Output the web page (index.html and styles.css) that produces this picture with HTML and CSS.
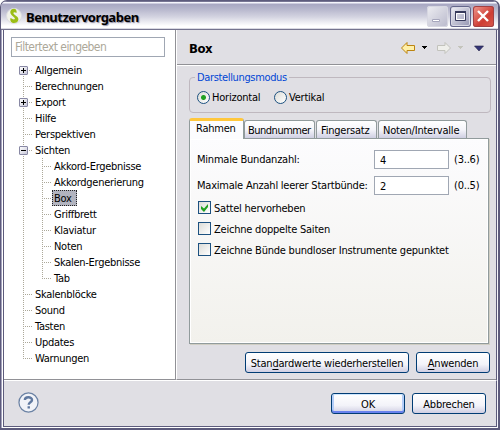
FILE: index.html
```html
<!DOCTYPE html>
<html lang="de">
<head>
<meta charset="utf-8">
<title>Benutzervorgaben</title>
<link rel="stylesheet" href="styles.css">
</head>
<body>
<div class="window">
  <header class="titlebar">
    <svg class="logo" width="16" height="16" viewBox="0 0 16 16"><circle cx="8" cy="8" r="7.500" fill="#f1f2ea" stroke="#dcdde0"/><path d="M8 .8C3.500 1 3.500 5.500 6 7.500l2.500 2.200c1 1.200 0 2-1.500 1.600L4.500 10c-.8 3 1 5 3.500 5 4 0 5.500-3.500 3.500-6L8 6.200C6.500 4.800 8 3.500 10.500 5c.5-2.500-.5-4.200-2.500-4.200z" fill="#9bbd16"/></svg>
    <h1 class="title">Benutzervorgaben</h1>
    <div class="controls">
      <span class="ctl ctl-min"><svg width="21" height="21"><path d="M5.500 13.500h7v2h-7z" fill="#fff" stroke="#a6a6bc"/></svg></span>
      <span class="ctl ctl-max"><svg width="21" height="21"><path d="M5.500 5.500h10v9h-10z" fill="none" stroke="#373a5c"/><path d="M5 6h11" stroke="#373a5c" stroke-width="2"/><path d="M6.500 7.500h8v6h-8z" fill="none" stroke="#fff"/></svg></span>
      <span class="ctl ctl-close"><svg width="21" height="21"><path d="M5 5l10 10M15 5L5 15" stroke="#fff" stroke-width="2.400"/></svg></span>
    </div>
  </header>
  <div class="main">
    <nav class="side">
      <div class="filter">Filtertext eingeben</div>
      <ul class="tree">
        <li class="node first"><i class="box plus"></i><span>Allgemein</span></li>
        <li class="node"><span>Berechnungen</span></li>
        <li class="node"><i class="box plus"></i><span>Export</span></li>
        <li class="node"><span>Hilfe</span></li>
        <li class="node"><span>Perspektiven</span></li>
        <li class="node"><i class="box"></i><span>Sichten</span></li>
        <li class="branch"><ul class="tree">
          <li class="node"><span>Akkord-Ergebnisse</span></li>
          <li class="node"><span>Akkordgenerierung</span></li>
          <li class="node"><span class="selected">Box</span></li>
          <li class="node"><span>Griffbrett</span></li>
          <li class="node"><span>Klaviatur</span></li>
          <li class="node"><span>Noten</span></li>
          <li class="node"><span>Skalen-Ergebnisse</span></li>
          <li class="node last"><span>Tab</span></li>
        </ul></li>
        <li class="node"><span>Skalenblöcke</span></li>
        <li class="node"><span>Sound</span></li>
        <li class="node"><span>Tasten</span></li>
        <li class="node"><span>Updates</span></li>
        <li class="node last"><span>Warnungen</span></li>
      </ul>
    </nav>
    <section class="page">
      <div class="pagehead">
        <h2>Box</h2>
        <svg width="90" height="16" viewBox="0 0 90 16">
          <path d="M1.500 8L7 2.500V5.500h7.500v5H7v3z" fill="#fff0a8" stroke="#bc8410"/>
          <path d="M22 6h5v1h-1v1h-1v1h-1V8h-1V7h-1z" fill="#000"/>
          <path d="M50.500 8L45 2.500V5.500h-7.500v5H45v3z" fill="#efefeb" stroke="#c2c2bc"/>
          <path d="M58 6h5v1h-1v1h-1v1h-1V8h-1V7h-1z" fill="#c4c4bc"/>
          <path d="M74.500 6h9L79 11z" fill="#343477" stroke="#242448" stroke-width=".6"/>
        </svg>
      </div>
      <div class="pagebody">
        <div class="group">
          <span class="legend">Darstellungsmodus</span>
          <span class="option"><i class="radio on"></i><span>Horizontal</span></span>
          <span class="option"><i class="radio"></i><span>Vertikal</span></span>
        </div>
        <div class="tabs">
          <span class="tab active">Rahmen</span>
          <span class="tab t2">Bundnummer</span>
          <span class="tab t3">Fingersatz</span>
          <span class="tab t4">Noten/Intervalle</span>
        </div>
        <div class="panel">
          <div class="field"><span class="lab">Minmale Bundanzahl:</span><span class="input">4</span><span class="range">(3..6)</span></div>
          <div class="field"><span class="lab">Maximale Anzahl leerer Startbünde:</span><span class="input">2</span><span class="range">(0..5)</span></div>
          <div class="check"><i class="cb"><svg width="11" height="11"><path d="M2 4v3l3 3 4-5V2L5 6.500z" fill="#21a121"/></svg></i><span>Sattel hervorheben</span></div>
          <div class="check"><i class="cb"></i><span>Zeichne doppelte Saiten</span></div>
          <div class="check"><i class="cb"></i><span>Zeichne Bünde bundloser Instrumente gepunktet</span></div>
        </div>
        <div class="actions">
          <span class="btn wide"><span>Stan<u>d</u>ardwerte wiederherstellen</span></span>
          <span class="btn"><span><u>A</u>nwenden</span></span>
        </div>
      </div>
    </section>
  </div>
  <footer class="footer">
    <svg class="help" width="21" height="21" viewBox="0 0 22 22"><circle cx="11" cy="11" r="10" fill="#f1f3f8" stroke="#6b82a4" stroke-width="1.300"/><path d="M7.200 8.500C7.200 4.500 14.700 4.500 14.700 8.300c0 2.500-3.500 2.400-3.500 5" fill="none" stroke="#6079a0" stroke-width="2.500"/><path d="M10 14.800h2.500v2.400H10z" fill="#6079a0"/></svg>
    <span class="btn default"><span>OK</span></span>
    <span class="btn"><span>Abbrechen</span></span>
  </footer>
</div>
</body>
</html>
```
FILE: styles.css
```css
* { box-sizing: border-box; }
body { margin: 0; background: #fff; font: 11px/16px "DejaVu Sans Condensed", "DejaVu Sans", sans-serif; letter-spacing: -.22px; color: #000; }
h1, h2, ul { margin: 0; padding: 0; }
ul { list-style: none; }
svg { display: block; flex: none; }
i { display: block; flex: none; }
u { text-decoration: underline; text-underline-offset: 2px; text-decoration-thickness: 1px; }
.window { width: 500px; height: 430px; border: 1px solid #5d5b7c; border-bottom-width: 2px; border-right-width: 2px; border-radius: 7px 7px 0 0; background: #e0dfe4; box-shadow: inset 1px 0 #a5a3bd, inset 2px 0 #fff, inset -1px 0 #f6f6fc, inset 0 -1px #fff; padding: 0 1px 1px 2px; overflow: hidden; white-space: nowrap; }
.titlebar { display: flex; align-items: center; height: 29px; margin: 0 -1px 0 -2px; padding: 2px 4px 0 5px; border-bottom: 1px solid #74738e; background: linear-gradient(#777593 0 1px, #f5f5fc 1px 2px, #a8a7c2 3px, #b6b6cc 8px, #d4d4e1 16px, #fff 25px, #fff 27px, #b3b3c5 28px); }
.title { flex: 1; margin-left: 4px; padding-top: 2px; font: bold 13px/20px "Noto Sans", sans-serif; letter-spacing: -.5px; text-shadow: 1px 1px 1px #8f8fa5; }
.controls { display: flex; gap: 2px; }
.ctl { width: 21px; height: 21px; border-radius: 3px; }
.ctl-min { background: linear-gradient(135deg, #eeeef2, #b9b9cc); box-shadow: inset 0 0 0 1px #d7d7e1; }
.ctl-max { background: linear-gradient(135deg, #f3f3f8, #9091af); box-shadow: inset 0 0 0 1px #64668b, inset 0 0 0 2px #d8d8e4; }
.ctl-close { background: linear-gradient(135deg, #f09a90, #ce3d34 60%, #d95b4d); box-shadow: inset 0 0 0 1px #a34043; }
.main { display: flex; height: 351px; margin-left: 1px; border-right: 1px solid #5d5b7c; border-bottom: 1px solid #fff; box-shadow: -1px 0 #5d5b7c; }
.side { flex: none; width: 173px; height: 350px; padding: 7px 0 0 7px; background: #fff; border-right: 1px solid #fff; border-bottom: 1px solid #919196; box-shadow: inset -1px 0 #919196; }
.filter { width: 154px; height: 20px; padding: 1px 3px; border: 1px solid #a0a7b3; color: #aca899; font-size: 12px; line-height: 17px; letter-spacing: -.55px; }
.tree { padding-top: 5px; letter-spacing: -.28px; }
.tree .tree { padding: 0; }
.node { display: flex; align-items: center; position: relative; height: 16px; padding-left: 24px; background: repeating-linear-gradient(#aca899 0 1px, #fff 1px 2px) 12px 0 / 1px 100% no-repeat, repeating-linear-gradient(90deg, #aca899 0 1px, #fff 1px 2px) 12px 8px / 9px 1px no-repeat; }
.node > span, .option > span, .check > span, .btn > span { padding-top: 2px; }
.first { background-position: 12px 8px, 12px 8px; }
.last { background-size: 1px 9px, 9px 1px; }
.branch { background: repeating-linear-gradient(#aca899 0 1px, #fff 1px 2px) 12px 0 / 1px 100% no-repeat; padding-left: 19px; }
.box { position: absolute; left: 8px; top: 4px; width: 9px; height: 9px; border: 1px solid #8888a4; border-radius: 1px; background: linear-gradient(#000, #000) 1px 3px / 5px 1px no-repeat, linear-gradient(135deg, #fff, #c7c7d8); }
.plus { background: linear-gradient(#000, #000) 1px 3px / 5px 1px no-repeat, linear-gradient(#000, #000) 3px 1px / 1px 5px no-repeat, linear-gradient(135deg, #fff, #c7c7d8); }
.node > .selected { width: 25px; height: 16px; margin-left: -2px; padding: 1px 0 0 1px; line-height: 14px; background: #b2b4bf; border: 1px dotted #222; }
.page { flex: none; width: 319px; height: 350px; border-bottom: 1px solid #919196; }
.pagehead { display: flex; justify-content: space-between; height: 36px; padding: 10px 6px 0 12px; border-bottom: 1px solid #fff; box-shadow: inset 0 -1px #919196; }
h2 { font: bold 13px/18px "DejaVu Sans Condensed", sans-serif; letter-spacing: -.5px; }
.pagebody { padding: 11px 6px 0 12px; }
.group { display: flex; position: relative; width: 302px; height: 36px; padding: 11px 0 0 7px; border: 1px solid #bfb8bf; border-radius: 4px; }
.legend { position: absolute; left: 5px; top: -8px; padding: 0 2px; background: #e0dfe4; color: #0046d5; letter-spacing: -.35px; }
.option { display: flex; align-items: center; width: 77px; gap: 2px; height: 16px; }
.radio { width: 13px; height: 13px; border: 1px solid #1c5180; border-radius: 50%; background: linear-gradient(135deg, #dcdcd7, #fff); }
.on { background: radial-gradient(circle, #21a121 0 2px, transparent 3px), linear-gradient(135deg, #dcdcd7, #fff); }
.tabs { display: flex; align-items: flex-end; height: 25px; gap: 1px; }
.tab { height: 18px; line-height: 20px; padding-left: 4px; border: 1px solid #919b9c; border-bottom: 0; border-radius: 3px 3px 0 0; background: linear-gradient(#fff, #f5f5fa 50%, #cfcfe2); }
.active { position: relative; width: 55px; height: 21px; margin: 0 -1px -1px 0; padding-left: 6px; line-height: 16px; border-top: 3px solid #ffc73c; background: #fcfcfe; }
.t2 { width: 71px; padding-left: 3px; letter-spacing: -.5px; }
.t3 { width: 61px; }
.t4 { width: 89px; }
.panel { width: 300px; height: 206px; padding: 11px 0 0 7px; border: 1px solid #919b9c; box-shadow: inset 0 0 0 1px #fff, 1px 1px #d0cec3; background: linear-gradient(#fcfcfe, #f2f1ec); }
.field { display: flex; align-items: center; height: 19px; margin-bottom: 7px; line-height: 18px; }
.field + .check { margin-top: -1px; }
.lab { width: 177px; padding-top: 1px; }
.input { width: 75px; height: 19px; padding: 0 5px; line-height: 19px; background: #fff; border: 1px solid #a0a7b3; }
.range { margin-left: 5px; padding-top: 1px; }
.check { display: flex; align-items: center; height: 13px; margin-bottom: 8px; gap: 3px; }
.cb { width: 13px; height: 13px; margin-left: 1px; border: 1px solid #1c5180; background: linear-gradient(135deg, #dcdcd7, #fff); }
.actions { display: flex; justify-content: flex-end; gap: 7px; padding: 8px 0 0; }
.btn { display: flex; justify-content: center; align-items: center; width: 74px; height: 21px; border: 1px solid #003c74; border-radius: 3px; background: linear-gradient(#fff, #f3f3f9 60%, #cfcee2); }
.wide { width: 164px; }
.default { box-shadow: inset 0 1px #cee7ff, inset 0 -2px #6982ee, inset 2px 0 #b3cdf8, inset -2px 0 #b3cdf8; }
.footer { display: flex; height: 46px; margin-left: 1px; padding: 12px 10px 0 14px; gap: 7px; border-right: 1px solid #5d5b7c; border-bottom: 1px solid #5d5b7c; box-shadow: -1px 0 #5d5b7c; }
.help { margin: -1px auto 0 0; }
```
